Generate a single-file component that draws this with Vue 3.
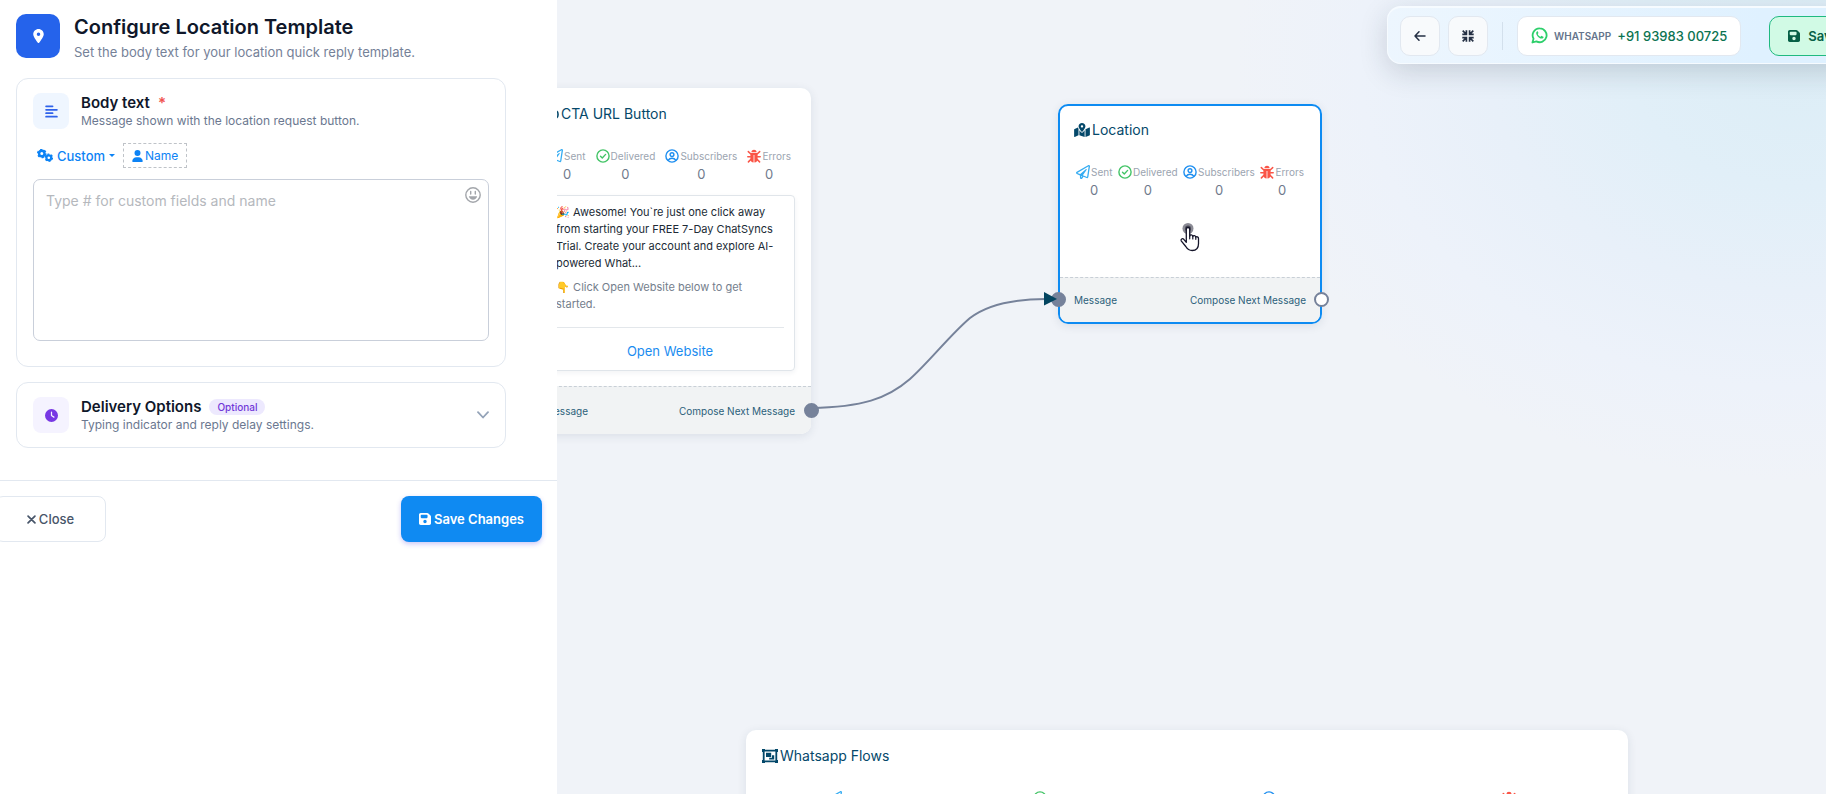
<script setup>
import { ref, h } from 'vue'

const body = ref('')

const statList = [
  { key: 'sent', label: 'Sent', value: 0 },
  { key: 'delivered', label: 'Delivered', value: 0 },
  { key: 'subscribers', label: 'Subscribers', value: 0 },
  { key: 'errors', label: 'Errors', value: 0 },
]

const svg = (viewBox, children) => () =>
  h('svg', { viewBox, fill: 'currentColor', 'aria-hidden': 'true' }, children())
const line = (width, children) =>
  h('g', { fill: 'none', stroke: 'currentColor', 'stroke-width': width, 'stroke-linecap': 'round', 'stroke-linejoin': 'round' }, children)
const p = (d) => h('path', { d })

const icons = {
  sent: svg('0 0 512 512', () => [p('M440 6.5L24 246.4c-34.4 19.9-31.1 70.8 5.7 85.9L144 379.6V464c0 46.4 59.2 65.5 86.6 28.6l43.8-59.1 111.9 46.2c5.9 2.4 12.1 3.6 18.3 3.6 8.2 0 16.3-2.1 23.6-6.2 12.8-7.2 21.6-20 23.9-34.5l59.4-387.2c6.1-40.1-36.9-68.8-71.5-48.9zM192 464v-64.6l36.6 15.1L192 464zm212.6-28.7l-153.8-63.5L391 169.5c10.7-15.5-9.5-33.5-23.7-21.2L155.8 332.6 48 288 464 48l-59.4 387.3z')]),
  delivered: svg('0 0 14 14', () => [line(1.4, [h('circle', { cx: 7, cy: 7, r: 6.1 }), p('M4.5 7.2 6.3 9 9.6 5.4')])]),
  subscribers: svg('0 0 14 14', () => [line(1.4, [h('circle', { cx: 7, cy: 7, r: 6.1 }), h('circle', { cx: 7, cy: 5.6, r: 1.9 }), p('M3.3 11.2C4.2 9.7 5.4 9.2 7 9.2s2.8.5 3.7 2')])]),
  errors: svg('0 0 14 14', () => [
    p('M4.4 3.3a2.6 2.6 0 0 1 5.2 0zM3.4 4h7.2v6c0 2-1.3 3.4-3.2 3.600V6h-.8v7.600C4.700 13.400 3.400 12 3.400 10z'),
    line(1.5, [p('M1.3 2.600 3.600 4.800M12.700 2.600 10.400 4.800M.8 7.700h2.600M13.200 7.700h-2.600M1.400 12.900l2.300-2.300M12.600 12.900l-2.300-2.300')]),
  ]),
}
const MapIcon = svg('0 0 576 512', () => [p('M288 0c-69.59 0-126 56.41-126 126 0 56.26 82.35 158.8 113.9 196.02 6.39 7.54 17.82 7.54 24.2 0C331.65 284.8 414 182.26 414 126 414 56.41 357.59 0 288 0zm0 168c-23.2 0-42-18.8-42-42s18.8-42 42-42 42 18.8 42 42-18.8 42-42 42zM20.12 215.95A32.006 32.006 0 0 0 0 245.66v250.32c0 11.32 11.43 19.06 21.94 14.86L160 448V214.92c-8.84-15.98-16.07-31.54-21.25-46.42L20.12 215.95zM288 359.67c-14.07 0-27.38-6.18-36.51-16.96-19.66-23.2-40.57-49.62-59.49-76.72v182l192 64V266c-18.92 27.09-39.82 53.52-59.49 76.72-9.13 10.77-22.44 16.95-36.51 16.95zm266.06-198.51L416 224v288l139.88-55.95A31.996 31.996 0 0 0 576 426.34V176.02c0-11.32-11.43-19.06-21.94-14.86z')])
const SaveIcon = svg('0 32 448 448', () => [p('M64 32C28.7 32 0 60.7 0 96V416c0 35.3 28.7 64 64 64H384c35.3 0 64-28.7 64-64V173.3c0-17-6.7-33.3-18.7-45.3L352 50.7C340 38.7 323.7 32 306.7 32H64zm0 96c0-17.7 14.3-32 32-32H288c17.7 0 32 14.3 32 32v64c0 17.7-14.3 32-32 32H96c-17.7 0-32-14.3-32-32V128zM224 288a64 64 0 1 1 0 128 64 64 0 1 1 0-128z')])
const GroupIcon = svg('0 0 16 14', () => [
  h('path', { 'fill-rule': 'evenodd', d: 'M0 0h3v.7h10V0h3v3h-.8v8h.8v3h-3v-.7H3v.7H0v-3h.8V3H0zM2.6 2.500v9h10.800v-9z' }),
  p('M4 3.700h5.200v4.200H4zM10 6.200h2.200v4.200H7.200V8.700H10z'),
])
</script>

<template>
  <div class="page">
    <aside class="panel">
      <header class="head">
        <span class="head-icon">
          <svg viewBox="0 0 384 512" fill="currentColor" aria-hidden="true"><path d="M215.7 499.2C267 435 384 279.4 384 192C384 86 298 0 192 0S0 86 0 192c0 87.4 117 243 168.3 307.2c12.3 15.3 35.1 15.3 47.4 0zM192 128a64 64 0 1 1 0 128 64 64 0 1 1 0-128z" /></svg>
        </span>
        <div>
          <h1>Configure Location Template</h1>
          <p>Set the body text for your location quick reply template.</p>
        </div>
      </header>

      <section class="card">
        <div class="card-head">
          <span class="card-icon blue">
            <svg viewBox="0 0 12 12" fill="none" stroke="currentColor" stroke-width="1.6" stroke-linecap="round" aria-hidden="true"><path d="M1 1.200h6M1 4.400h10M1 7.600h6M1 10.800h10" /></svg>
          </span>
          <div>
            <h2><label for="body-text">Body text</label> <span class="req">*</span></h2>
            <p>Message shown with the location request button.</p>
          </div>
        </div>

        <div class="tools">
          <button type="button" class="custom">
            <svg viewBox="0 0 16 13" fill="none" stroke="currentColor" aria-hidden="true">
              <circle cx="4.8" cy="4.5" r="2.7" stroke-width="2.4" />
              <circle cx="4.8" cy="4.5" r="4.1" stroke-width="1.5" stroke-dasharray="2.150 2.143" />
              <circle cx="11.8" cy="8.7" r="2.400" stroke-width="2.200" />
              <circle cx="11.8" cy="8.7" r="3.600" stroke-width="1.400" stroke-dasharray="1.900 1.870" />
            </svg>
            Custom <i class="caret"></i>
          </button>
          <button type="button" class="name">
            <svg viewBox="0 0 448 512" fill="currentColor" aria-hidden="true"><path d="M224 256A128 128 0 1 0 224 0a128 128 0 1 0 0 256zm-45.700 48C79.800 304 0 383.800 0 482.300C0 498.700 13.300 512 29.700 512H418.300c16.400 0 29.700-13.300 29.700-29.700C448 383.800 368.200 304 269.700 304H178.300z" /></svg>Name
          </button>
        </div>

        <div class="field">
          <textarea id="body-text" v-model="body" placeholder="Type # for custom fields and name"></textarea>
          <button type="button" class="emoji" aria-label="Insert emoji">
            <svg viewBox="0 0 16 16" aria-hidden="true">
              <circle cx="8" cy="8" r="7.200" fill="none" stroke="currentColor" stroke-width="1.400" />
              <path d="M5.700 4.500v2.600M10.300 4.500v2.600" stroke="currentColor" stroke-width="1.400" stroke-linecap="round" />
              <path d="M3.800 9.300h8.400c-.6 2.200-2.200 3.400-4.200 3.400S4.400 11.500 3.800 9.300z" fill="currentColor" />
            </svg>
          </button>
        </div>
      </section>

      <section class="card">
        <button type="button" class="card-head toggle" aria-expanded="false">
          <span class="card-icon violet">
            <svg viewBox="0 0 512 512" fill="currentColor" aria-hidden="true"><path d="M256 0a256 256 0 1 1 0 512A256 256 0 1 1 256 0zM232 120V256c0 8 4 15.500 10.700 20l96 64c11 7.400 25.900 4.400 33.300-6.700s4.400-25.900-6.700-33.300L280 243.200V120c0-13.300-10.700-24-24-24s-24 10.700-24 24z" /></svg>
          </span>
          <span class="grow">
            <span class="toggle-title">Delivery Options <span class="badge">Optional</span></span>
            <span class="toggle-sub">Typing indicator and reply delay settings.</span>
          </span>
          <svg class="chevron" viewBox="0 0 12 8" fill="none" stroke="currentColor" stroke-width="1.800" stroke-linecap="round" stroke-linejoin="round" aria-hidden="true"><path d="M1 1.200 6 6.500l5-5.300" /></svg>
        </button>
      </section>

      <footer class="actions">
        <button type="button" class="btn close">
          <svg viewBox="0 0 10 10" fill="none" stroke="currentColor" stroke-width="1.900" stroke-linecap="round" aria-hidden="true"><path d="M1.200 1.200l7.600 7.600M8.800 1.200 1.200 8.800" /></svg>
          Close
        </button>
        <button type="button" class="btn save"><SaveIcon />Save Changes</button>
      </footer>
    </aside>

    <main class="canvas">
      <article class="node cta">
        <div class="node-body">
          <h3>
            <svg viewBox="0 0 14 14" fill="none" stroke="currentColor" stroke-width="1.600" aria-hidden="true"><rect x="1" y="4" width="12" height="7" rx="3" /></svg>CTA URL Button
          </h3>
          <ul class="stats">
            <li v-for="s in statList" :key="s.key">
              <span class="stat" :class="s.key"><component :is="icons[s.key]" />{{ s.label }}</span>
              <b>{{ s.value }}</b>
            </li>
          </ul>
          <div class="preview">
            <p>🎉 Awesome! You`re just one click away from starting your FREE 7-Day ChatSyncs Trial. Create your account and explore AI-powered What...</p>
            <p class="muted">👇 Click Open Website below to get started.</p>
            <a href="#">Open Website</a>
          </div>
        </div>
        <div class="node-foot">
          <span>Message</span><span>Compose Next Message</span>
          <i class="port out filled"></i>
        </div>
      </article>

      <article class="node location">
        <div class="node-body">
          <h3><MapIcon />Location</h3>
          <ul class="stats">
            <li v-for="s in statList" :key="s.key">
              <span class="stat" :class="s.key"><component :is="icons[s.key]" />{{ s.label }}</span>
              <b>{{ s.value }}</b>
            </li>
          </ul>
          <div class="tap">
            <svg viewBox="0 0 22 30" aria-hidden="true">
              <circle cx="9" cy="6.500" r="5.500" fill="#8b8b95" />
              <circle cx="9" cy="6.500" r="3" fill="#4b4b58" />
              <path d="M7.300 20.300V7.200a1.700 1.700 0 0 1 3.400 0v7c.3-1.900 3-1.700 3.100.3.500-1.300 2.800-1 3 .7.800-1 2.700-.5 2.700 1.300v5.300c0 4-2.300 6.700-6.300 6.700-3.300 0-5-1.600-6.400-4L2.200 18.800c-.8-1.500 1.200-2.900 2.600-1.500z" fill="#fff" stroke="#15152a" stroke-width="1.300" stroke-linejoin="round" />
              <path d="M10.700 14v2.800M13.800 14.600v2.400M16.800 15.300v2" stroke="#15152a" stroke-width="1.200" stroke-linecap="round" />
            </svg>
          </div>
        </div>
        <div class="node-foot">
          <i class="port in filled"></i>
          <span>Message</span><span>Compose Next Message</span>
          <i class="port out"></i>
        </div>
      </article>

      <article class="node flows">
        <div class="node-body">
          <h3><GroupIcon />Whatsapp Flows</h3>
          <ul class="stats">
            <li v-for="s in statList" :key="s.key">
              <span class="stat" :class="s.key"><component :is="icons[s.key]" />{{ s.label }}</span>
              <b>{{ s.value }}</b>
            </li>
          </ul>
        </div>
      </article>

      <svg class="edge" viewBox="0 0 260 130" aria-hidden="true">
        <path d="M4 117C55 116 80 108 103 88C122 71 143 44 163 27C181 13 208 8 239 8" fill="none" stroke="#76829a" stroke-width="2" />
        <path d="M237 1v13.500L250 8z" fill="#034560" />
      </svg>

      <nav class="toolbar">
        <button type="button" class="tool" aria-label="Back">
          <svg viewBox="0 0 12 12" fill="none" stroke="currentColor" stroke-width="1.500" stroke-linecap="round" stroke-linejoin="round" aria-hidden="true"><path d="M11 6H1M5 1.800 1 6l4 4.200" /></svg>
        </button>
        <button type="button" class="tool" aria-label="Fit to screen">
          <svg viewBox="0 0 12 12" fill="none" stroke="currentColor" stroke-width="1.700" aria-hidden="true"><path d="M4.400.3v4.100H.3M7.600.3v4.100h4.100M4.400 11.700V7.600H.3M7.600 11.700V7.600h4.100M.7.7l3.300 3.300M11.300.7 8 4M.7 11.300 4 8M11.300 11.300 8 8" /></svg>
        </button>
        <span class="sep"></span>
        <span class="phone">
          <svg viewBox="0 0 18 18" aria-hidden="true">
            <path d="M9.200 1.500a7.300 7.300 0 1 1-3.500 13.700L1.500 16.400l1.200-4A7.300 7.300 0 0 1 9.200 1.500z" fill="none" stroke="#2dcf6b" stroke-width="1.900" stroke-linejoin="round" />
            <path d="M6.300 4.800c-1.300 1-1 2.900.6 4.900 1.800 2.200 4.400 3.400 6 1.900.5-.5.500-1.200.2-1.400l-1.700-.8c-.6-.2-.9 1-1.500.8-1.300-.5-2.200-1.400-2.700-2.600-.1-.4.800-.8.600-1.400l-.6-1.400c-.2-.3-.6-.3-.9 0z" fill="#2dcf6b" />
          </svg>
          <small>WHATSAPP</small><strong>+91 93983 00725</strong>
        </span>
        <button type="button" class="save-flow"><SaveIcon />Save</button>
      </nav>
    </main>
  </div>
</template>

<style>
body { margin: 0; overflow: hidden; background: #f0f3f8; }
</style>

<style scoped>
.page { display: flex; height: 100vh; overflow: hidden; font-family: Inter, "Noto Sans", sans-serif; color: #0f172a; }
.page * { box-sizing: border-box; }
button { font: inherit; cursor: pointer; padding: 0; border: 0; background: none; color: inherit; }
svg { display: block; flex: none; }
h1, h2, h3, p, ul { margin: 0; padding: 0; }

.panel { flex: 0 0 557px; background: #fff; position: relative; }
.head { display: flex; gap: 14px; align-items: flex-start; padding: 14px 16px 16px; }
.head-icon { display: grid; place-items: center; width: 44px; height: 44px; border-radius: 10px; background: #2563eb; color: #fff; }
.head-icon svg { width: 11px; height: 14px; }
h1 { font-size: 20px; line-height: 26px; font-weight: 600; }
.head p { margin-top: 2px; font-size: 13px; line-height: 20px; color: #758198; }

.card { margin: 0 51px 15px 16px; padding: 14px 16px; border: 1px solid #e2e8f0; border-radius: 12px; }
.card:first-of-type { padding-bottom: 25px; }
.card-head { display: flex; gap: 12px; align-items: center; width: 100%; text-align: left; }
.card-icon { display: grid; place-items: center; width: 36px; height: 36px; border-radius: 8px; }
.card-icon.blue { background: #eff6ff; color: #2f62ea; }
.card-icon.violet { background: #f5f3ff; color: #7838e4; }
.card-icon svg { width: 13px; height: 13px; }
h2, .toggle-title { display: flex; align-items: center; gap: 8px; font-size: 15px; line-height: 20px; font-weight: 600; }
.req { color: #f0524f; }
.card-head p, .toggle-sub { display: block; font-size: 12px; line-height: 16px; color: #6b7890; }
.grow { flex: 1; }
.badge { padding: 0 8px; border-radius: 8px; background: #ede9fe; color: #7238d8; font-size: 10px; line-height: 16px; font-weight: 500; }
.chevron { width: 12px; height: 8px; color: #94a3b8; }

.tools { display: flex; gap: 8px; align-items: center; margin: 14px 0 11px 4px; color: #0d83f5; }
.custom { display: flex; gap: 4px; align-items: center; font-size: 13px; line-height: 20px; font-weight: 500; }
.custom svg { width: 16px; height: 13px; }
.caret { border: 3px solid transparent; border-top-color: currentColor; border-bottom: 0; }
.name { display: flex; gap: 2px; align-items: center; height: 25px; padding: 0 8px; border: 1px dashed #bfc3c8; font-size: 12px; }
.name svg { width: 11px; height: 12px; }
.field { position: relative; }
textarea { display: block; width: 100%; height: 162px; padding: 10px 12px; border: 1px solid #c9cfda; border-radius: 7px; resize: none; font: 14px/22px Inter, "Noto Sans", sans-serif; color: #0f172a; background: #fff; }
textarea::placeholder { color: #b5b8bd; opacity: 1; }
.emoji { position: absolute; top: 8px; right: 8px; color: #a3a6ab; }
.emoji svg { width: 16px; height: 16px; }

.actions { display: flex; justify-content: space-between; margin-top: 32px; padding: 15px 15px 15px 0; border-top: 1px solid #e2e8f0; }
.btn { display: flex; align-items: center; justify-content: center; gap: 3px; height: 46px; border-radius: 8px; font-size: 13px; }
.close { width: 111px; margin-left: -5px; border: 1px solid #e2e8f0; color: #475569; font-weight: 500; }
.close svg { width: 9px; height: 9px; }
.save { width: 141px; background: #0f8af2; color: #fff; font-weight: 600; box-shadow: 0 2px 5px rgba(79, 70, 229, .3); }
.save svg { width: 12px; height: 12px; }

.canvas { flex: 1; min-width: 0; position: relative; overflow: hidden; background: radial-gradient(ellipse 560px 420px at calc(100% - 30px) 60px, #dcedf6 0%, #e1eff8 30%, #e8f0f9 55%, #edf2fa 78%, #f0f3f8 100%); }
.node { position: absolute; border-radius: 10px; background: #fff; box-shadow: 0 2px 10px rgba(30, 50, 80, .1); color: #04486a; }
.cta { left: -28px; top: 88px; width: 282px; }
.location { left: 501px; top: 104px; width: 264px; outline: 2px solid #0d8bf2; outline-offset: -2px; }
.flows { left: 189px; top: 730px; width: 882px; }
.node-body { padding: 16px 16px 15px; }
h3 { display: flex; align-items: center; gap: 2px; font-size: 14px; line-height: 20px; font-weight: 400; }
h3 svg { width: 16px; height: 14px; }
.cta h3 svg { width: 14px; }
.stats { display: flex; justify-content: space-between; list-style: none; padding: 0 2px; margin-top: 23px; }
.cta .stats { padding: 0 4px; }
.flows .stats { padding: 0 66px; }
.stats li { display: flex; flex-direction: column; align-items: center; }
.stat { display: flex; align-items: center; gap: 1px; font-size: 10px; line-height: 18px; color: #9ba4b0; }
.stat svg { width: 14px; height: 14px; }
.stat.sent svg { color: #35acf2; }
.stat.delivered svg { color: #43c467; }
.stat.subscribers svg { color: #1f8ff0; }
.stat.errors svg { color: #fa5547; }
.stats b { font-size: 13px; line-height: 18px; font-weight: 400; color: #6f7a8c; }
.preview { margin-top: 12px; padding: 8px 10px 0; border: 1px solid #e0e5ea; border-radius: 4px; box-shadow: 0 2px 5px rgba(30, 50, 80, .06); font-size: 11px; line-height: 17px; color: #212b36; }
.preview .muted { margin: 7px 0 14px; color: #747e8c; }
.preview a { display: block; height: 43px; border-top: 1px solid #e3e7eb; font-size: 13px; line-height: 46px; text-align: center; text-decoration: none; color: #1b8cf0; }
.tap { display: grid; place-items: center; height: 60px; margin-top: 8px; }
.tap svg { width: 22px; height: 30px; }
.node-foot { position: relative; display: flex; justify-content: space-between; align-items: center; height: 48px; padding: 0 16px; border-top: 1px dashed #c8cfd6; border-radius: 0 0 10px 10px; background: #f1f3f4; font-size: 10px; color: #2c5f7a; }
.location .node-foot { margin: 0 2px 2px; padding: 0 14px; height: 45px; border-radius: 0 0 8px 8px; }
.location .node-body { padding-bottom: 10px; }
.port { position: absolute; top: 50%; width: 15px; height: 15px; margin-top: -8px; border: 2px solid #76829a; border-radius: 50%; background: #fff; }
.port.filled { background: #76829a; }
.port.out { right: -8px; }
.location .port.out { right: -9px; }
.port.in { left: -9px; }
.edge { position: absolute; left: 250px; top: 291px; width: 260px; height: 130px; pointer-events: none; }

.toolbar { position: absolute; left: 830px; top: 6px; display: flex; align-items: center; gap: 8px; height: 58px; width: 620px; padding: 0 12px; border: 1px solid #f6fbff; border-top-width: 2px; border-radius: 14px; background: linear-gradient(100deg, #edf6fe, #dff1ff 60%); box-shadow: 0 8px 28px rgba(30, 41, 59, .17); }
.tool { display: grid; place-items: center; width: 40px; height: 40px; border: 1px solid #e2e8f0; border-radius: 10px; background: #f8fafc; color: #253044; }
.tool svg { width: 12px; height: 12px; }
.sep { width: 1px; height: 28px; margin: 0 6px; background: #d3e0ec; }
.phone { display: flex; align-items: center; gap: 6px; height: 40px; padding: 0 13px; border: 1px solid #e2e8f0; border-radius: 10px; background: #fff; white-space: nowrap; }
.phone svg { width: 17px; height: 17px; }
.phone small { font-size: 10px; font-weight: 600; color: #64748b; }
.phone strong { font-size: 13px; font-weight: 500; color: #0b7351; }
.save-flow { display: flex; align-items: center; gap: 8px; height: 40px; margin-left: 20px; padding: 0 18px; border: 1px solid #1fba80; border-radius: 10px; background: #d1fae5; color: #065f46; font-size: 13px; font-weight: 600; }
.save-flow svg { width: 12px; height: 12px; }
</style>
